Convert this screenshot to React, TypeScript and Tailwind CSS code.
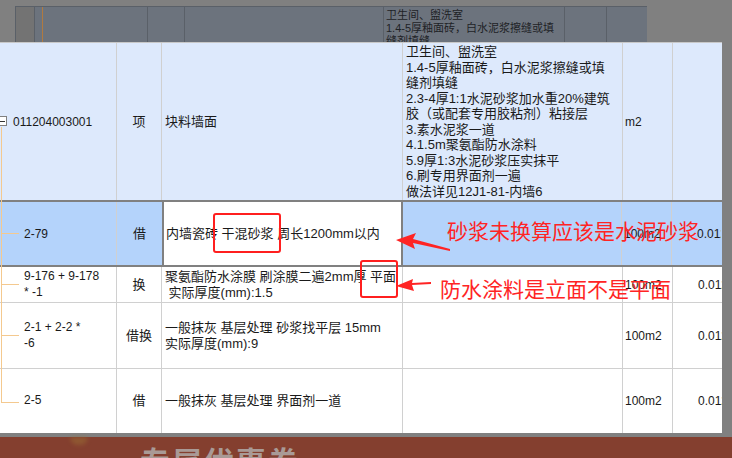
import React from 'react';

const cjk = "font-['Liberation_Sans','Noto_Sans_CJK_SC',sans-serif]";

const descLines = [
  '卫生间、盥洗室',
  '1.4-5厚釉面砖，白水泥浆擦缝或填',
  '缝剂填缝',
  '2.3-4厚1:1水泥砂浆加水重20%建筑',
  '胶（或配套专用胶粘剂）粘接层',
  '3.素水泥浆一道',
  '4.1.5m聚氨酯防水涂料',
  '5.9厚1:3水泥砂浆压实抹平',
  '6.刷专用界面剂一遍',
  '做法详见12J1-81-内墙6',
];

type Row = {
  code: string[];
  kind: string;
  name: string[];
  unit: string;
  h: string;
};

const rows: Row[] = [
  { code: ['9-176 + 9-178', '* -1'], kind: '换', name: ['聚氨酯防水涂膜 刷涂膜二遍2mm厚 平面', '\u00a0实际厚度(mm):1.5'], unit: '100m2', h: 'h-[36px]' },
  { code: ['2-1 + 2-2 *', '-6'], kind: '借换', name: ['一般抹灰 基层处理 砂浆找平层 15mm', '实际厚度(mm):9'], unit: '100m2', h: 'h-[66px]' },
  { code: ['2-5'], kind: '借', name: ['一般抹灰 基层处理 界面剂一道'], unit: '100m2', h: 'h-[64px]' },
];

function Cell({ className = '', children }: { className?: string; children?: React.ReactNode }) {
  return <div className={`flex flex-col justify-center overflow-hidden border-r border-[#d0d0d0] ${className}`}>{children}</div>;
}

export default function App() {
  return (
    <div className={`relative w-[732px] h-[458px] overflow-hidden bg-[#808080] text-[#1a1a1a] ${cjk}`}>
      {/* dimmed window behind */}
      <div className="h-[42px] pt-[6px] pl-[15px]">
        <div className="flex h-[36px] w-[632px] border-t border-l border-[#5a6068] bg-[#6c737d] text-[11px] leading-[13px] text-[#1e2226]">
          <div className="w-[19px] border-r border-[#5a6068] bg-[#737373]" />
          <div className="w-[8px] border-r border-[#b07a40]" />
          <div className="w-[105px] border-r border-[#5a6068]" />
          <div className="w-[37px] border-r border-[#5a6068]" />
          <div className="w-[199px] border-r border-[#5a6068]" />
          <div className="w-[181px] overflow-hidden border-r border-[#5a6068] pl-[2px] pt-[2px]">
            <div>卫生间、盥洗室</div>
            <div>1.4-5厚釉面砖，白水泥浆擦缝或填</div>
            <div>缝剂填缝</div>
          </div>
          <div className="w-[42px] border-r border-[#5a6068]" />
          <div className="flex-1" />
        </div>
      </div>

      {/* main table */}
      <div className="w-[722px] border-t border-[#c8c8c8] bg-white text-[13px]">
        <div className="flex h-[157px] bg-[#dde9fc]">
          <Cell className="w-[117px] pl-[13px] text-[12px]">011204003001</Cell>
          <Cell className="w-[45px] items-center">项</Cell>
          <Cell className="w-[241px] pl-[3px]">块料墙面</Cell>
          <div className="w-[220px] overflow-hidden border-r border-[#d0d0d0] pl-[3px] pt-[1px] leading-[15.5px]">
            {descLines.map((l) => (
              <div key={l} className="whitespace-nowrap">{l}</div>
            ))}
          </div>
          <Cell className="w-[50px] pl-[2px] text-[12px]">m2</Cell>
          <Cell className="w-[49px] border-r-0" />
        </div>

        <div className="flex h-[67px] border-y-2 border-[#808080] bg-[#b4d3fb]">
          <Cell className="w-[117px] pl-[24px] text-[12px]">2-79</Cell>
          <Cell className="w-[45px] items-center border-r-0">借</Cell>
          <div className="flex w-[241px] flex-col justify-center border-x-2 border-[#808080] bg-white pl-[2px] whitespace-nowrap">
            内墙瓷砖 干混砂浆 周长1200mm以内
          </div>
          <Cell className="w-[219px]" />
          <Cell className="w-[50px] pl-[2px] text-[12px]">100m2</Cell>
          <Cell className="w-[49px] border-r-0 pl-[25px] text-[12px] whitespace-nowrap">0.0125</Cell>
        </div>

        {rows.map((r, i) => (
          <div key={i} className={`flex ${r.h} ${i < rows.length - 1 ? 'border-b border-[#d0d0d0]' : ''}`}>
            <Cell className="w-[117px] pl-[24px] text-[12px] leading-[15.5px]">
              {r.code.map((c) => (
                <div key={c} className="whitespace-pre">{c}</div>
              ))}
            </Cell>
            <Cell className="w-[45px] items-center">{r.kind}</Cell>
            <Cell className="w-[241px] pl-[3px] leading-[15.5px]">
              {r.name.map((n) => (
                <div key={n} className="whitespace-nowrap">{n}</div>
              ))}
            </Cell>
            <Cell className="w-[220px]" />
            <Cell className="w-[50px] pl-[2px] text-[12px]">{r.unit}</Cell>
            <Cell className="w-[49px] border-r-0 pl-[25px] text-[12px] whitespace-nowrap">0.0125</Cell>
          </div>
        ))}
      </div>

      {/* bottom banner */}
      <div className="mt-[4px] h-[30px] overflow-hidden bg-[#843f2f] pl-[140px] pt-[11px]">
        <div className="text-[30px] font-bold leading-none tracking-[2px] text-[#a99a96]">专属优惠券</div>
      </div>
      <div className="absolute left-[70px] top-[437px] h-[8px] w-[18px] rounded-b-full bg-[#9a7034] opacity-50 blur-[2px]" />

      {/* tree lines */}
      <div className="absolute left-[1px] top-[127px] h-[276px] w-px bg-[#f4c98f]" />
      {[233, 284, 335, 402].map((y) => (
        <div key={y} className="absolute left-[1px] h-px w-[18px] bg-[#f4c98f]" style={{ top: y }} />
      ))}
      <div className="absolute left-[-3px] top-[116px] h-[10px] w-[10px] border border-[#808080] bg-white">
        <div className="mt-[4px] ml-[2px] h-px w-[5px] bg-[#333]" />
      </div>

      {/* annotation boxes */}
      <div className="absolute left-[213px] top-[213px] h-[40px] w-[68px] rounded-[3px] border-2 border-[#ff1f1f]" />
      <div className="absolute left-[360px] top-[260px] h-[38px] w-[38px] rounded-[3px] border-2 border-[#ff1f1f]" />

      {/* annotation texts */}
      <div className="absolute left-[447px] top-[218px] whitespace-nowrap font-['Noto_Sans_CJK_SC',sans-serif] text-[21px] leading-[24px] text-[#ff2424]">
        砂浆未换算应该是水泥砂浆
      </div>
      <div className="absolute left-[440px] top-[276px] whitespace-nowrap font-['Noto_Sans_CJK_SC',sans-serif] text-[21px] leading-[24px] text-[#ff2424]">
        防水涂料是立面不是平面
      </div>

      {/* arrows */}
      <svg className="absolute left-0 top-0" width="732" height="458" viewBox="0 0 732 458">
        <polygon points="450,251 413,243 415,249 396,240 416,233 413,239 450,249" fill="#ff2424" />
        <polygon points="431,284 412,285 414,291 396,286 413,279 412,283 431,282" fill="#ff2424" />
      </svg>
    </div>
  );
}
